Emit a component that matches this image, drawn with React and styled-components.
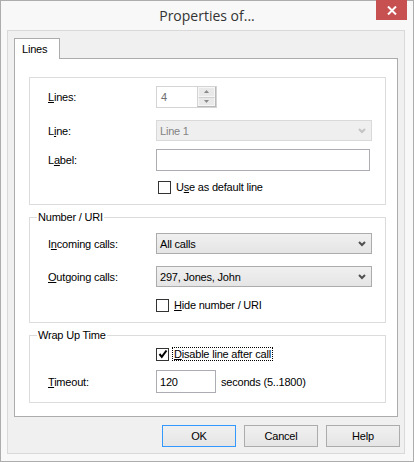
import React from "react";
import styled, { createGlobalStyle } from "styled-components";

const GlobalStyle = createGlobalStyle`
  html, body {
    margin: 0;
    padding: 0;
    background: #fff;
  }
  body {
    font-family: "Liberation Sans", Arial, sans-serif;
    font-size: 11px;
    letter-spacing: -0.2px;
    color: #000;
  }
`;

const Window = styled.div`
  box-sizing: border-box;
  width: 414px;
  height: 462px;
  border: 1px solid #adadad;
  background: #f8f8f8;
  display: flex;
  flex-direction: column;
`;

const TitleBar = styled.div`
  flex-shrink: 0;
  height: 29px;
  display: grid;
  grid-template-columns: 1fr auto 1fr;
  align-items: center;
`;

const Title = styled.div`
  grid-column: 2;
  font-family: "Open Sans", "Noto Sans", sans-serif;
  font-size: 14px;
  letter-spacing: 0;
  color: #333;
`;

const CloseButton = styled.div`
  grid-column: 3;
  justify-self: end;
  align-self: start;
  width: 31px;
  height: 20px;
  margin: -1px 6px 0 0;
  background: #c75050;
  display: flex;
  align-items: center;
  justify-content: center;
`;

const Client = styled.div`
  flex: 1;
  margin: 0 8px 7px 6px;
  border: 1px solid #d9d9d9;
  background: #f0f0f0;
  padding: 7px 6px 6px;
  display: flex;
  flex-direction: column;
`;

const TabStrip = styled.div`
  display: flex;
`;

const Tab = styled.div`
  box-sizing: border-box;
  position: relative;
  z-index: 1;
  width: 46px;
  height: 21px;
  margin-bottom: -1px;
  padding: 0 0 1px 7px;
  border: 1px solid #acacac;
  border-bottom: none;
  background: #fff;
  display: flex;
  align-items: center;
`;

const TabPanel = styled.div`
  flex: 1;
  border: 1px solid #acacac;
  background: #fff;
  padding: 18px 11px 0 14px;
  display: flex;
  flex-direction: column;
`;

const Group = styled.fieldset`
  margin: ${(p) => p.$top || 0}px 0 0;
  padding: ${(p) => p.$padTop}px 12px ${(p) => p.$padBottom}px 18px;
  border: 1px solid #dcdcdc;
  min-width: 0;
`;

/* caption sits 8px in from the frame, not from the padded content */
const Legend = styled.legend`
  margin-left: -11px;
  padding: 0 1px;
  line-height: 13px;
`;

const FieldRow = styled.div`
  display: flex;
  align-items: center;
  height: ${(p) => p.$h}px;
  margin-top: ${(p) => p.$top || 0}px;
`;

const FieldLabel = styled.div`
  width: 108px;
  flex-shrink: 0;
`;

const ComboBox = styled.div`
  box-sizing: border-box;
  width: 216px;
  height: 21px;
  padding: 0 5px 0 3px;
  border: 1px solid ${(p) => (p.$disabled ? "#d9d9d9" : "#acacac")};
  background: ${(p) =>
    p.$disabled ? "#efefef" : "linear-gradient(#f0f0f0, #e5e5e5)"};
  color: ${(p) => (p.$disabled ? "#838383" : "#000")};
  display: flex;
  align-items: center;
  justify-content: space-between;
`;

const TextBox = styled.div`
  box-sizing: border-box;
  width: ${(p) => p.$w}px;
  height: ${(p) => p.$h}px;
  padding-left: 3px;
  border: 1px solid #abadb3;
  background: #fff;
  display: flex;
  align-items: center;
`;

const SpinBox = styled.div`
  box-sizing: border-box;
  width: 61px;
  height: 22px;
  border: 1px solid #d4d4d4;
  background: #fff;
  display: flex;
`;

const SpinValue = styled.div`
  flex: 1;
  padding-left: 4px;
  color: #6d6d6d;
  display: flex;
  align-items: center;
`;

const SpinButtons = styled.div`
  width: 17px;
  display: flex;
  flex-direction: column;
  border-left: 1px solid #d4d4d4;
  border-right: 1px solid #b9b9b9;
  border-bottom: 1px solid #b9b9b9;
`;

const SpinHalf = styled.div`
  flex: 1;
  background: #e9e9e9;
  border: 1px solid #f6f6f6;
  display: flex;
  align-items: center;
  justify-content: center;
  & + & {
    border-top-color: #d0d0d0;
  }
`;

const CheckRow = styled.div`
  display: flex;
  align-items: center;
  height: 14px;
  margin-top: ${(p) => p.$top}px;
  padding-left: ${(p) => 108 + (p.$shift || 0)}px;
`;

const CheckBox = styled.span`
  box-sizing: border-box;
  width: 13px;
  height: 13px;
  border: 1px solid #333;
  background: #fff;
  flex-shrink: 0;
  display: flex;
  align-items: center;
  justify-content: center;
`;

const CheckLabel = styled.span`
  margin-left: 3px;
  padding: 0 1px;
  line-height: 12px;
  border: 1px dotted ${(p) => (p.$focused ? "#000" : "transparent")};
`;

const Hint = styled.span`
  margin-left: 5px;
`;

const ButtonRow = styled.div`
  display: flex;
  justify-content: flex-end;
  gap: 8px;
  margin: 8px -2px 0 0;
`;

const DialogButton = styled.div`
  box-sizing: border-box;
  width: 74px;
  height: 22px;
  border: 1px solid ${(p) => (p.$default ? "#3399ff" : "#acacac")};
  background: linear-gradient(#f0f0f0, #e5e5e5);
  display: flex;
  align-items: center;
  justify-content: center;
`;

const Chevron = ({ disabled }) => (
  <svg width="8" height="6" viewBox="0 0 8 6">
    <polyline
      points="1,1 4,4 7,1"
      fill="none"
      stroke={disabled ? "#c4c4c4" : "#505050"}
      strokeWidth="2"
    />
  </svg>
);

const Arrow = ({ up }) => (
  <svg width="5" height="3" viewBox="0 0 5 3">
    <polygon points={up ? "2.5,0 5,3 0,3" : "0,0 5,0 2.5,3"} fill="#8a8a8a" />
  </svg>
);

const Tick = () => (
  <svg width="10" height="10" viewBox="0 0 10 10">
    <polyline
      points="1.5,5 3.8,7.8 8.5,1.5"
      fill="none"
      stroke="#000"
      strokeWidth="2"
    />
  </svg>
);

const Check = ({ checked, focused, shift, top, children }) => (
  <CheckRow $top={top} $shift={shift}>
    <CheckBox>{checked && <Tick />}</CheckBox>
    <CheckLabel $focused={focused}>{children}</CheckLabel>
  </CheckRow>
);

export default function App() {
  return (
    <>
      <GlobalStyle />
      <Window>
        <TitleBar>
          <Title>Properties of...</Title>
          <CloseButton>
            <svg width="10" height="9" viewBox="0 0 10 9">
              <path d="M1 0.5 L9 8.5 M9 0.5 L1 8.5" stroke="#fff" strokeWidth="2" />
            </svg>
          </CloseButton>
        </TitleBar>

        <Client>
          <TabStrip>
            <Tab>Lines</Tab>
          </TabStrip>

          <TabPanel>
            <Group $padTop={8} $padBottom={10}>
              <FieldRow $h={22}>
                <FieldLabel>
                  <u>L</u>ines:
                </FieldLabel>
                <SpinBox>
                  <SpinValue>4</SpinValue>
                  <SpinButtons>
                    <SpinHalf>
                      <Arrow up />
                    </SpinHalf>
                    <SpinHalf>
                      <Arrow />
                    </SpinHalf>
                  </SpinButtons>
                </SpinBox>
              </FieldRow>
              <FieldRow $h={21} $top={12}>
                <FieldLabel>
                  L<u>i</u>ne:
                </FieldLabel>
                <ComboBox $disabled>
                  <span>Line 1</span>
                  <Chevron disabled />
                </ComboBox>
              </FieldRow>
              <FieldRow $h={22} $top={8}>
                <FieldLabel>
                  L<u>a</u>bel:
                </FieldLabel>
                <TextBox $w={214} $h={22} />
              </FieldRow>
              <Check top={9} shift={2}>
                U<u>s</u>e as default line
              </Check>
            </Group>

            <Group $top={6} $padTop={9} $padBottom={10}>
              <Legend>Number / URI</Legend>
              <FieldRow $h={21}>
                <FieldLabel>
                  I<u>n</u>coming calls:
                </FieldLabel>
                <ComboBox>
                  <span>All calls</span>
                  <Chevron />
                </ComboBox>
              </FieldRow>
              <FieldRow $h={21} $top={12}>
                <FieldLabel>
                  <u>O</u>utgoing calls:
                </FieldLabel>
                <ComboBox>
                  <span>297, Jones, John</span>
                  <Chevron />
                </ComboBox>
              </FieldRow>
              <Check top={11}>
                <u>H</u>ide number / URI
              </Check>
            </Group>

            <Group $top={6} $padTop={5} $padBottom={9}>
              <Legend>Wrap Up Time</Legend>
              <Check top={0} checked focused>
                <u>D</u>isable line after call
              </Check>
              <FieldRow $h={23} $top={9}>
                <FieldLabel>
                  <u>T</u>imeout:
                </FieldLabel>
                <TextBox $w={60} $h={23}>
                  120
                </TextBox>
                <Hint>seconds (5..1800)</Hint>
              </FieldRow>
            </Group>
          </TabPanel>

          <ButtonRow>
            <DialogButton $default>OK</DialogButton>
            <DialogButton>Cancel</DialogButton>
            <DialogButton>Help</DialogButton>
          </ButtonRow>
        </Client>
      </Window>
    </>
  );
}
